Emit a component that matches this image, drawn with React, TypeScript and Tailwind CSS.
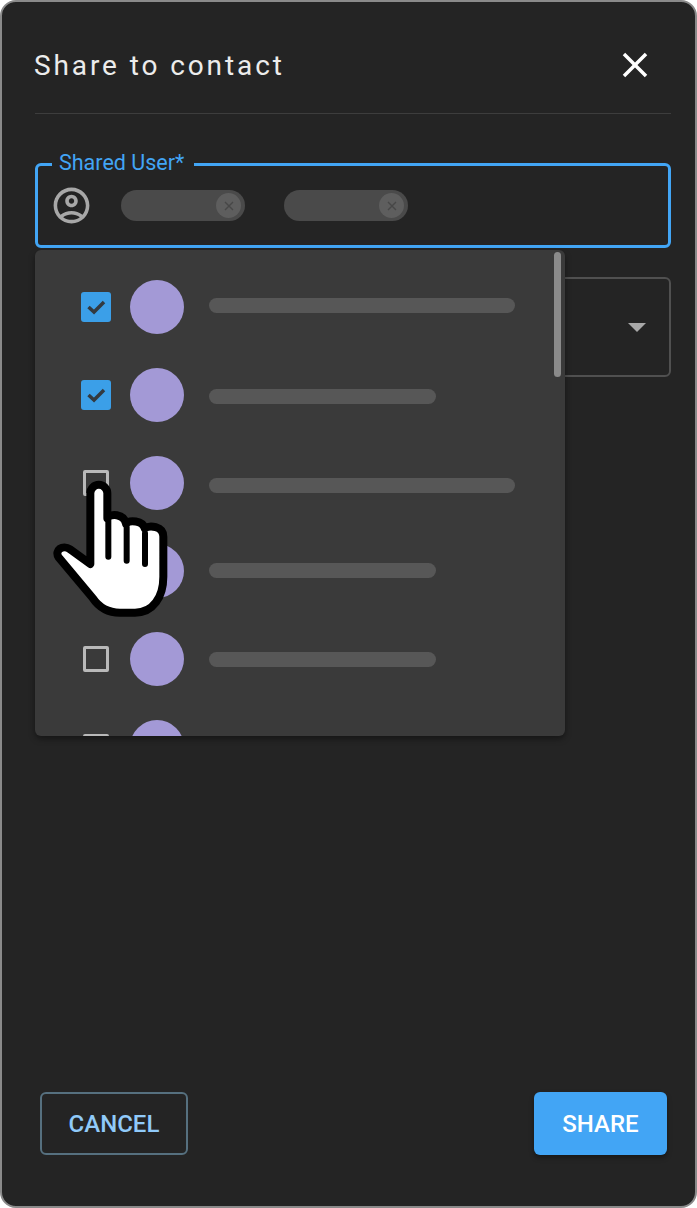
import React from "react";

const rows = [
  { checked: true, width: "w-[306px]", nudge: "-mt-[3px]" },
  { checked: true, width: "w-[227px]", nudge: "mt-[2px]" },
  { checked: false, width: "w-[306px]", nudge: "mt-[5px]" },
  { checked: false, width: "w-[227px]", nudge: "-mt-[2px]" },
  { checked: false, width: "w-[227px]", nudge: "" },
  { checked: false, width: "w-[227px]", nudge: "" },
];

const Chip = () => (
  <div className="flex h-[31px] w-[124px] items-center justify-end rounded-full bg-[#4a4a4a] pr-[4px]">
    <div className="flex size-[25px] items-center justify-center rounded-full bg-[#5e5e5e]">
      <svg width="12" height="12" viewBox="0 0 12 12" fill="none" stroke="#474747" strokeWidth="1.4">
        <path d="M2 2l8 8M10 2l-8 8" />
      </svg>
    </div>
  </div>
);

const HandCursor = () => (
  <svg
    className="absolute left-[28px] top-[438px]"
    width="200"
    height="310"
    viewBox="0 0 600 930"
    fill="none"
  >
    <path
      d="M181 372V160a25.500 25.500 0 0 1 51 0v75c8-16 50-14 56 16 10-12 50-10 56 14 14-10 56-8 56 25v120c0 60-30 108-85 108h-45c-35 0-62-14-82-44L86 352c-14-20 12-40 34-24z"
      fill="#ffffff"
      stroke="#000000"
      strokeWidth="24"
      strokeLinejoin="round"
    />
    <path d="M235 240V350M290 262V362M345 280V372" stroke="#000000" strokeWidth="18" strokeLinecap="round" />
  </svg>
);

const App = () => {
  return (
    <div
      className="relative flex h-[1208px] w-[697px] flex-col overflow-hidden rounded-[16px] border-2 border-[#8a8a8a] bg-[#242424] pl-[33px] pr-[24px] text-white"
      style={{ fontFamily: "Roboto, sans-serif" }}
    >
      <div className="flex h-[112px] items-start justify-between border-b border-[#3d3d3d]">
        <h2 className="-ml-px mt-[46px] text-[28px] leading-[36px] tracking-[2.9px] text-[#ececec]">Share to contact</h2>
        <svg className="mt-[42px] mr-[15px]" width="42" height="42" viewBox="0 0 24 24" fill="#ffffff">
          <path d="M19 6.41 17.59 5 12 10.590 6.410 5 5 6.410 10.590 12 5 17.590 6.410 19 12 13.410 17.590 19 19 17.590 13.410 12z" />
        </svg>
      </div>

      <div className="relative mt-[49px] flex h-[85px] items-center gap-[30px] rounded-[6px] border-[3px] border-[#42a5f5] pl-[12px]">
        <span className="absolute left-[14px] top-[-15px] h-[24px] bg-[#242424] pl-[7px] pr-[10px] text-[21.500px] leading-[24px] text-[#42a5f5]">
          Shared User*
        </span>
        <svg width="43" height="43" viewBox="0 0 24 24" fill="#a8a8a8" className="-mr-[2px]">
          <path d="M12 2C6.480 2 2 6.480 2 12s4.480 10 10 10 10-4.480 10-10S17.520 2 12 2zM7.350 18.500C8.660 17.560 10.260 17 12 17s3.340.560 4.650 1.500c-1.310.940-2.910 1.500-4.650 1.500s-3.340-.560-4.650-1.500zm10.790-1.380C16.450 15.800 14.320 15 12 15s-4.450.800-6.140 2.120C4.700 15.730 4 13.950 4 12c0-4.420 3.580-8 8-8s8 3.580 8 8c0 1.950-.700 3.730-1.860 5.120z" />
          <path d="M12 6c-1.930 0-3.500 1.570-3.500 3.500S10.070 13 12 13s3.500-1.570 3.500-3.500S13.930 6 12 6zm0 5c-.830 0-1.500-.670-1.500-1.500S11.170 8 12 8s1.500.670 1.500 1.500S12.830 11 12 11z" />
        </svg>
        <div className="flex gap-[39px]">
          <Chip />
          <Chip />
        </div>
      </div>

      <div className="mt-[29px] flex h-[100px] items-center justify-end rounded-[6px] border-2 border-[#505050] pr-[23px]">
        <div className="h-0 w-0 border-x-[9px] border-t-[9px] border-x-transparent border-t-[#a8a8a8]" />
      </div>

      <div className="mt-auto mb-[51px] flex items-center justify-between pl-[5px] pr-[4px]">
        <button className="h-[63px] w-[148px] rounded-[6px] border-2 border-[#56707f] text-[24px] font-medium text-[#90caf9]">
          CANCEL
        </button>
        <button className="h-[63px] w-[133px] rounded-[6px] bg-[#42a5f5] text-[24px] font-medium text-white shadow-[0_3px_5px_rgba(0,0,0,0.35)]">
          SHARE
        </button>
      </div>

      <div className="absolute left-[33px] top-[248px] h-[486px] w-[530px] overflow-hidden rounded-[6px] bg-[#3a3a3a] shadow-[0_3px_6px_rgba(0,0,0,0.4)]">
        <div className="absolute right-[4px] top-[2px] h-[125px] w-[7px] rounded-full bg-[#8a8a8a]" />
        <div className="flex flex-col pt-[30px]">
          {rows.map((row, i) => (
            <div key={i} className="mb-[34px] flex h-[54px] shrink-0 items-center pl-[46px]">
              {row.checked ? (
                <div className="flex size-[30px] items-center justify-center rounded-[3px] bg-[#3b9fe8]">
                  <svg width="30" height="30" viewBox="0 0 30 30" fill="none" stroke="#333a40" strokeWidth="3.500">
                    <path d="M7.500 15 13 20 23 10" />
                  </svg>
                </div>
              ) : (
                <div className="m-[2px] size-[26px] rounded-[2px] border-[3px] border-[#b9b9b9]" />
              )}
              <div className="ml-[19px] size-[54px] rounded-full bg-[#a399d6]" />
              <div className={`ml-[25px] h-[15px] rounded-full bg-[#575757] ${row.width} ${row.nudge}`} />
            </div>
          ))}
        </div>
      </div>

      <HandCursor />
    </div>
  );
};

export default App;
